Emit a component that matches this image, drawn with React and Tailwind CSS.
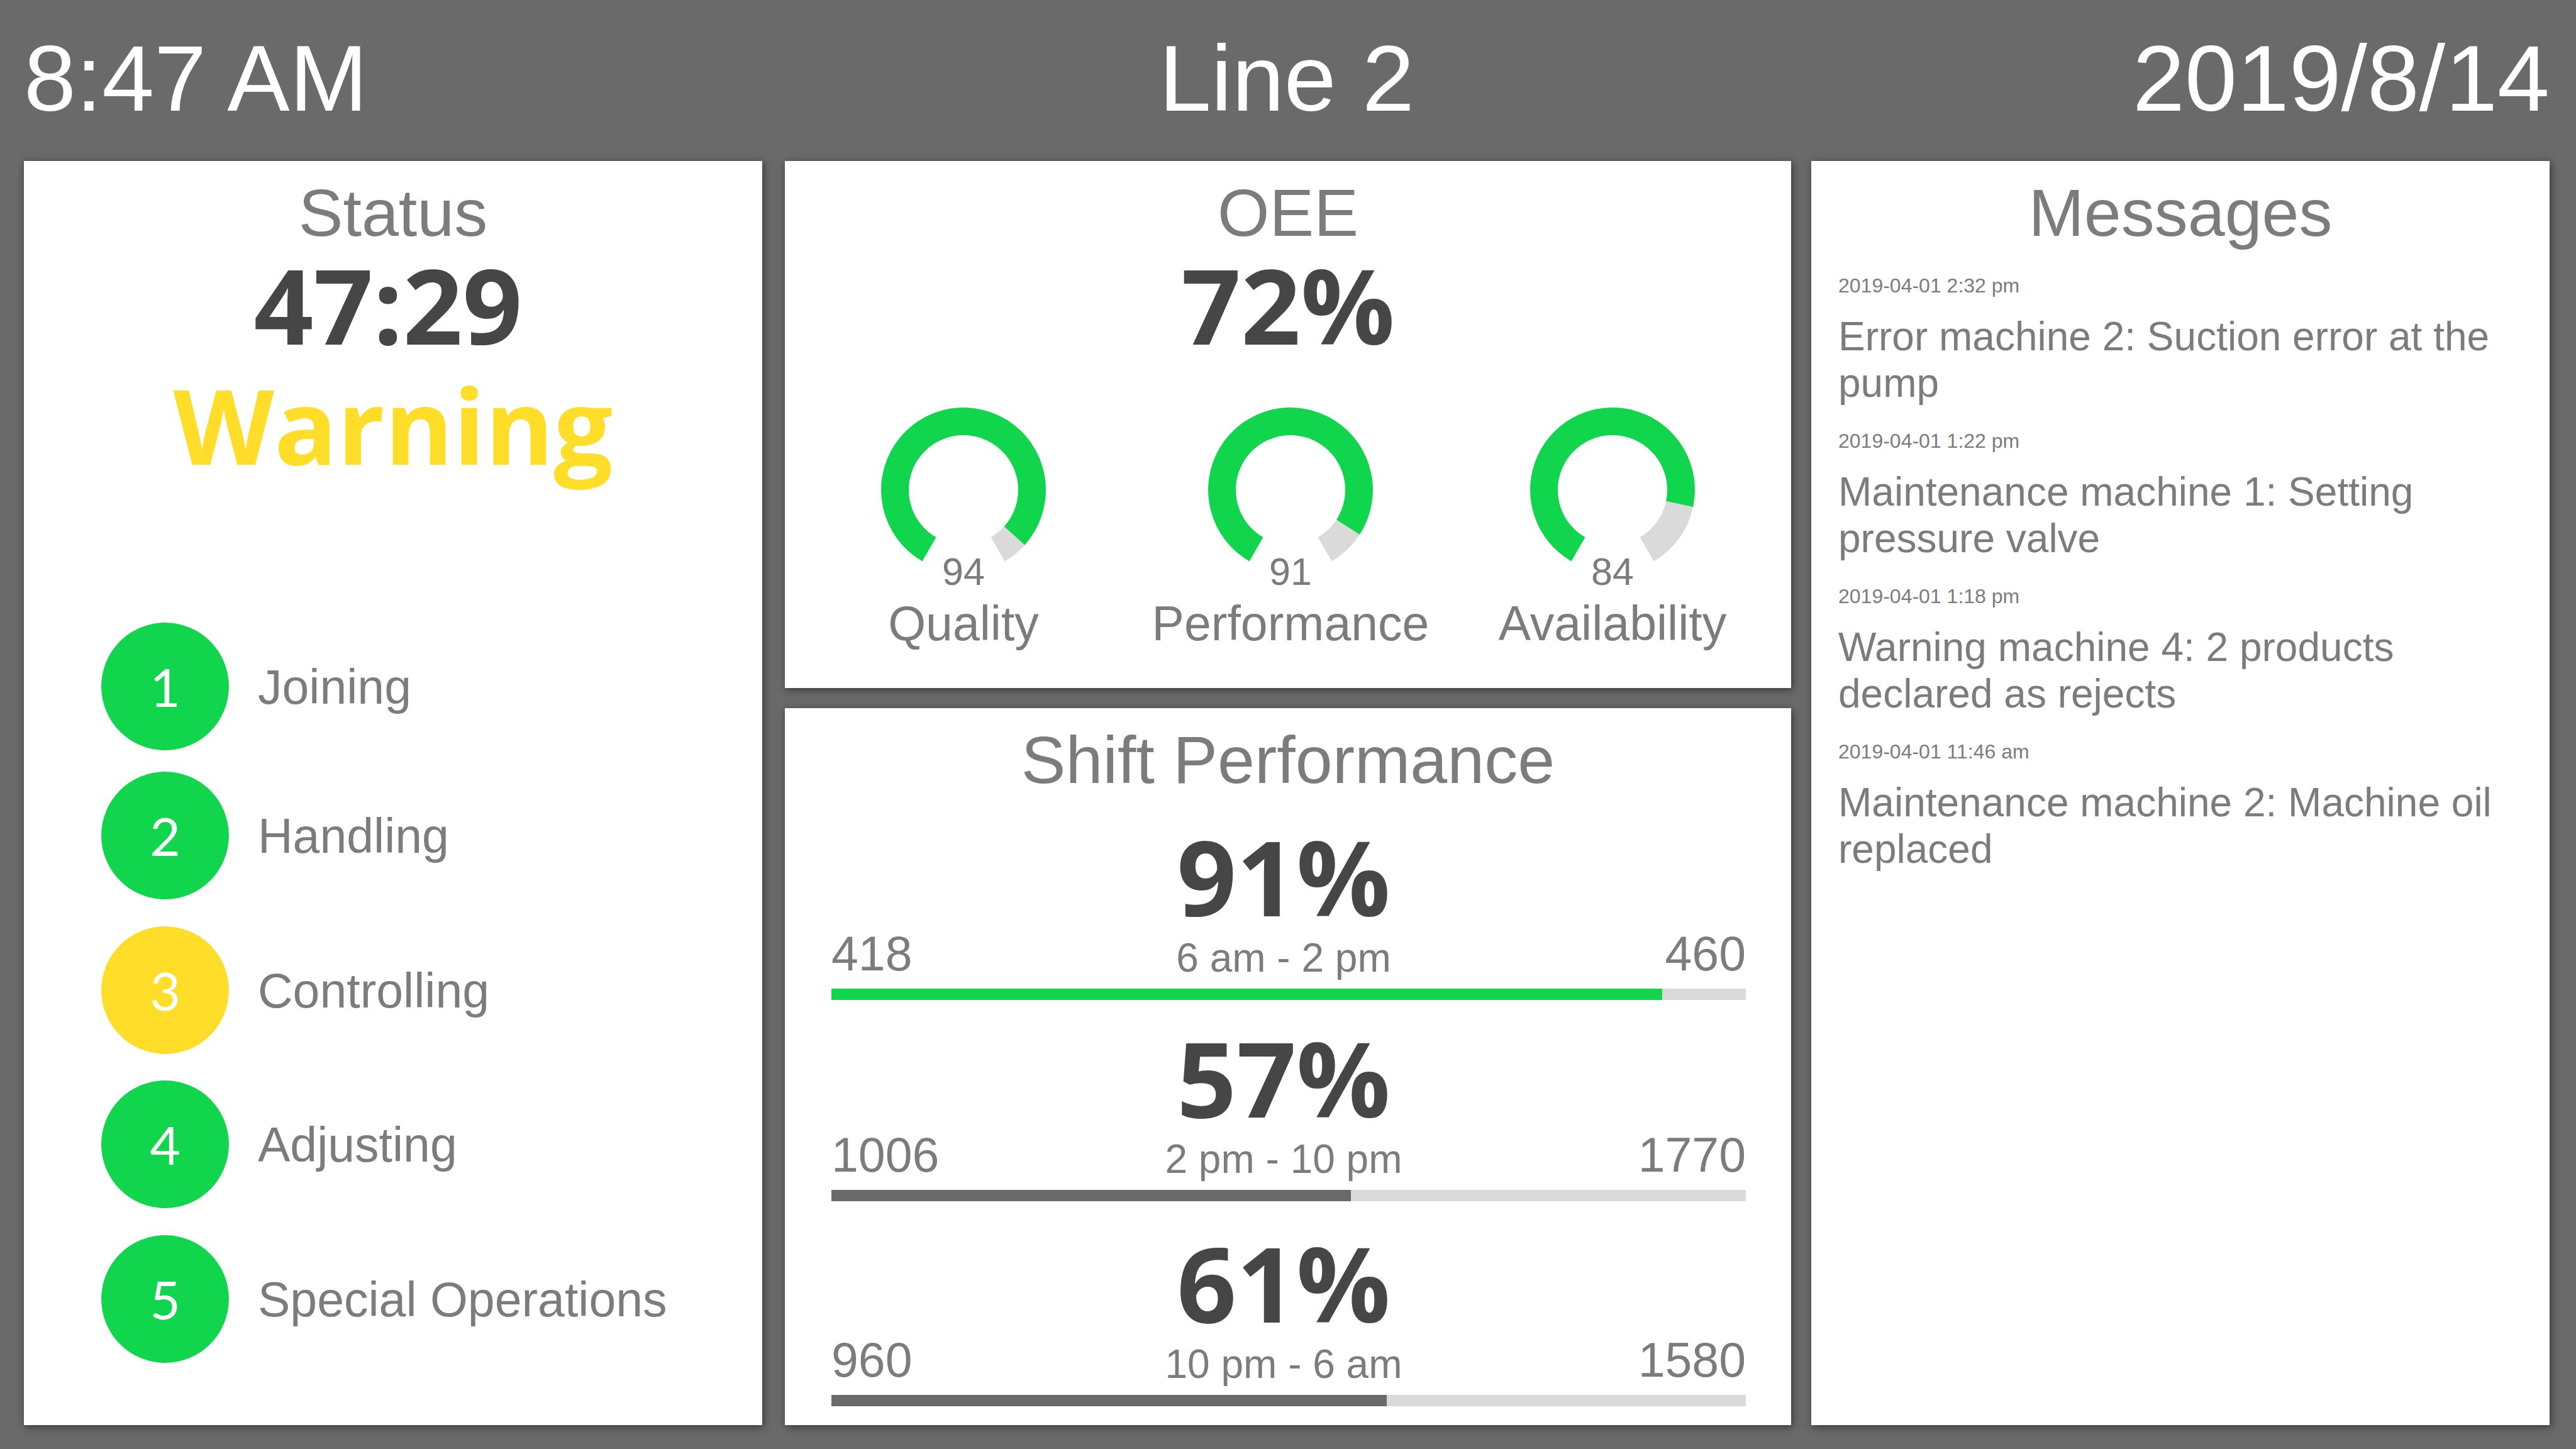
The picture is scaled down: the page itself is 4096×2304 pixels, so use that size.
const STATIONS = [
  { id: 1, name: "Joining", tone: "bg-[#10d54d]", space: "mt-[231px]" },
  { id: 2, name: "Handling", tone: "bg-[#10d54d]", space: "mt-[34px]" },
  { id: 3, name: "Controlling", tone: "bg-[#ffdd29]", space: "mt-[43px]" },
  { id: 4, name: "Adjusting", tone: "bg-[#10d54d]", space: "mt-[42px]" },
  { id: 5, name: "Special Operations", tone: "bg-[#10d54d]", space: "mt-[43px]" },
];

const GAUGES = [
  { label: "Quality", value: 94 },
  { label: "Performance", value: 91 },
  { label: "Availability", value: 84 },
];

const SHIFTS = [
  { percent: "91%", hours: "6 am - 2 pm", made: 418, goal: 460, tone: "bg-[#10d54d]", space: "mt-[39px]" },
  { percent: "57%", hours: "2 pm - 10 pm", made: 1006, goal: 1770, tone: "bg-[#6a6a6a]", space: "mt-[39px]" },
  { percent: "61%", hours: "10 pm - 6 am", made: 960, goal: 1580, tone: "bg-[#6a6a6a]", space: "mt-[45px]" },
];

const MESSAGES = [
  { time: "2019-04-01 2:32 pm", text: "Error machine 2: Suction error at the pump" },
  { time: "2019-04-01 1:22 pm", text: "Maintenance machine 1: Setting pressure valve" },
  { time: "2019-04-01 1:18 pm", text: "Warning machine 4: 2 products declared as rejects" },
  { time: "2019-04-01 11:46 am", text: "Maintenance machine 2: Machine oil replaced" },
];

function Card({ title, className, children }) {
  return (
    <section className={`flex flex-col bg-white pt-5 shadow-[2px_3px_12px_rgba(0,0,0,0.5)] ${className}`}>
      <h2 className="text-center text-[106px] leading-[124px]">{title}</h2>
      {children}
    </section>
  );
}

function Figure({ children, className = "text-[#464646]" }) {
  return (
    <p className={`text-center font-['Open_Sans',sans-serif] text-[166px] leading-[168px] font-bold ${className}`}>
      {children}
    </p>
  );
}

// Ring segment between two angles, in degrees clockwise from the top.
function ringPath(from, to) {
  const point = (radius, angle) => {
    const a = (angle * Math.PI) / 180;
    return `${132 + radius * Math.sin(a)} ${132 - radius * Math.cos(a)}`;
  };
  const large = to - from > 180 ? 1 : 0;
  return `M${point(131, from)}A131 131 0 ${large} 1 ${point(131, to)}L${point(87, to)}A87 87 0 ${large} 0 ${point(87, from)}Z`;
}

function Gauge({ label, value }) {
  const end = 210 + value * 3;
  return (
    <div className="flex flex-col items-center">
      <svg viewBox="0 0 264 246" className="h-[246px] w-[264px]" aria-hidden="true">
        <path d={ringPath(210, end)} fill="#10d54d" />
        <path d={ringPath(end, 510)} fill="#dadada" />
      </svg>
      <span className="-mt-4 text-[61px] leading-[64px]">{value}</span>
      <span className="mt-[6px] text-[77px] leading-[88px]">{label}</span>
    </div>
  );
}

function Shift({ percent, hours, made, goal, tone, space }) {
  return (
    <div className={space}>
      <div className="grid grid-cols-[1fr_auto_1fr] items-end text-[77px] leading-[88px]">
        <span>{made}</span>
        <div className="pr-4 text-center">
          <Figure>{percent}</Figure>
          <p className="mt-[9px] text-[64px] leading-[74px]">{hours}</p>
        </div>
        <span className="text-right">{goal}</span>
      </div>
      <div
        className="mt-3 h-[18px] bg-[#dadada]"
        role="progressbar"
        aria-label={hours}
        aria-valuenow={made}
        aria-valuemax={goal}
      >
        <div className={`h-full ${tone}`} style={{ width: `${(made / goal) * 100}%` }} />
      </div>
    </div>
  );
}

export default function App() {
  return (
    <div className="flex min-h-screen flex-col bg-[#6a6a6a] pr-[42px] pb-[38px] pl-[38px] font-['Liberation_Sans',Arial,sans-serif] text-[#7c7c7c]">
      <header className="grid grid-cols-3 pt-[37px] pb-[43px] text-[149px] leading-[176px] text-white">
        <time>8:47 AM</time>
        <h1 className="text-center">Line 2</h1>
        <time className="text-right">2019/8/14</time>
      </header>

      <div className="flex flex-1">
        <Card title="Status" className="min-w-0 flex-[1174]">
          <Figure className="pr-4 text-[#464646]">47:29</Figure>
          <Figure className="mt-[23px] text-[#ffdd29]">Warning</Figure>
          <ol className="px-[123px]">
            {STATIONS.map((s) => (
              <li key={s.id} className={`flex items-center gap-[46px] ${s.space}`}>
                <span
                  className={`flex size-[203px] items-center justify-center rounded-full font-['Lato',sans-serif] text-[84px] leading-[88px] text-white ${s.tone}`}
                >
                  {s.id}
                </span>
                <span className="text-[77px] leading-[88px]">{s.name}</span>
              </li>
            ))}
          </ol>
        </Card>

        <main className="mr-8 ml-9 flex min-w-0 flex-[1600] flex-col gap-8">
          <Card title="OEE" className="pb-[59px]">
            <Figure>72%</Figure>
            <div className="mt-[79px] grid grid-cols-[520fr_520fr_504fr] pr-8 pl-6">
              {GAUGES.map((g) => (
                <Gauge key={g.label} {...g} />
              ))}
            </div>
          </Card>
          <Card title="Shift Performance" className="flex-1">
            <div className="pr-[72px] pl-[74px]">
              {SHIFTS.map((s) => (
                <Shift key={s.hours} {...s} />
              ))}
            </div>
          </Card>
        </main>

        <Card title="Messages" className="min-w-0 flex-[1174]">
          <ul className="mt-[36px] flex flex-col gap-[37px] px-[43px]">
            {MESSAGES.map((m) => (
              <li key={m.time}>
                <time className="block text-[32px] leading-[36px]">{m.time}</time>
                <p className="mt-[26px] text-[64px] leading-[74px]">{m.text}</p>
              </li>
            ))}
          </ul>
        </Card>
      </div>
    </div>
  );
}
